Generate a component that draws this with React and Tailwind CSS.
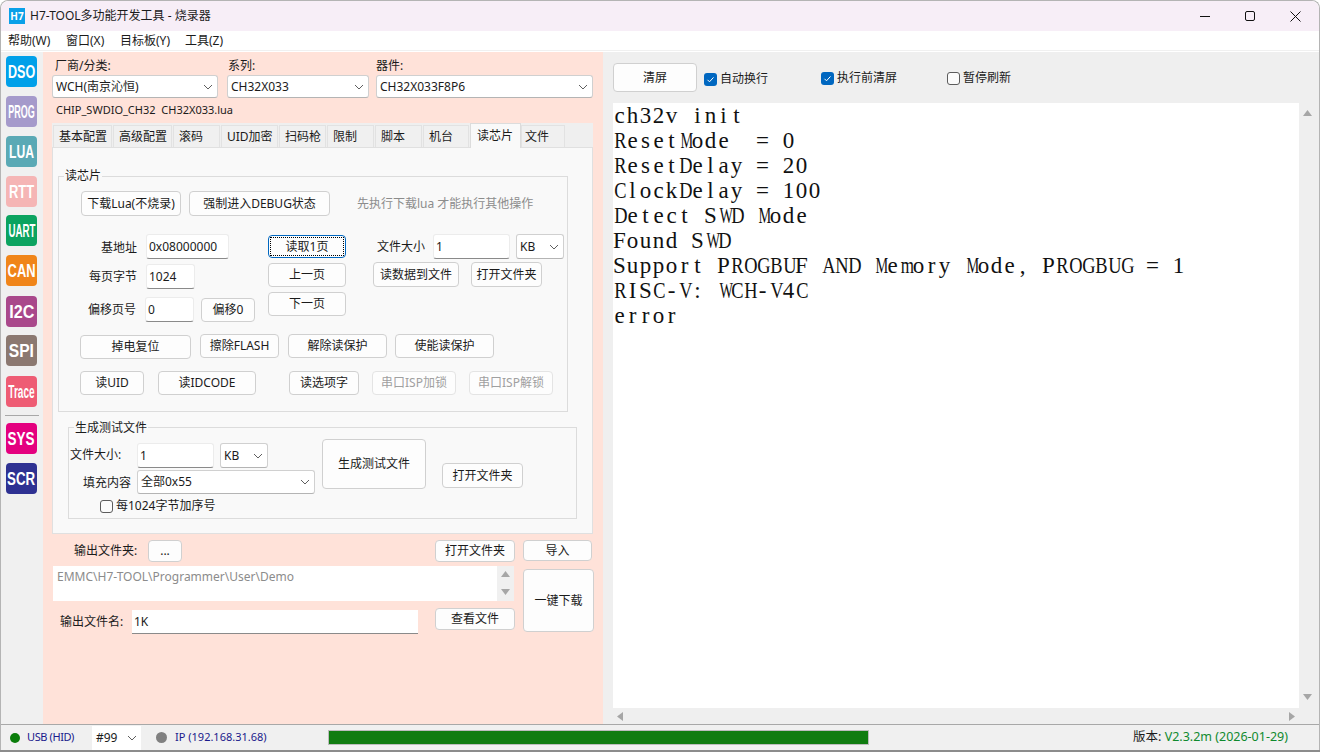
import React from 'react'

const LOG_LINES = [
  'ch32v init',
  'ResetMode  = 0',
  'ResetDelay = 20',
  'ClockDelay = 100',
  'Detect SWD Mode',
  'Found SWD',
  'Support PROGBUF AND Memory Mode, PROGBUG = 1',
  'RISC-V: WCH-V4C',
  'error',
]

const TOOLS = [
  ['DSO', 'bg-[#00a0e9] mt-[4px]', 'text-[19px] scale-x-[0.66]'],
  ['PROG', 'bg-[#a59acb] mt-[9px]', 'text-[18px] scale-x-[0.5]'],
  ['LUA', 'bg-[#5aa9b5] mt-[9px]', 'text-[19px] scale-x-[0.64]'],
  ['RTT', 'bg-[#f5b5b5] mt-[9px]', 'text-[19px] scale-x-[0.68]'],
  ['UART', 'bg-[#0ba360] mt-[8px]', 'text-[18px] scale-x-[0.54]'],
  ['CAN', 'bg-[#f08519] mt-[9px]', 'text-[19px] scale-x-[0.68]'],
  ['I2C', 'bg-[#a9488b] mt-[10px]', 'text-[19px] scale-x-[0.85]'],
  ['SPI', 'bg-[#8b7870] mt-[8px]', 'text-[19px] scale-x-[0.82]'],
  ['Trace', 'bg-[#ee5c74] mt-[10px]', 'text-[18px] scale-x-[0.56]'],
]

const TABS = [
  ['基本配置', 'w-[59px]'],
  ['高级配置', 'w-[59px]'],
  ['滚码', 'w-[47px]'],
  ['UID加密', 'w-[57px]'],
  ['扫码枪', 'w-[47px]'],
  ['限制', 'w-[47px]'],
  ['脚本', 'w-[47px]'],
  ['机台', 'w-[46px]'],
]

// log font is a fixed 13px cell, wide serif caps get squeezed to fit
function squeeze(ch) {
  if (ch === 'M' || ch === 'W') return 0.62
  if (ch === 'm' || ch === 'w') return 0.74
  if (/[A-RT-Z]/.test(ch) && ch !== 'I' && ch !== 'F' && ch !== 'P') return 0.8
  return 1
}

function LogLine({ text }) {
  return (
    <div className="h-[25px] whitespace-pre font-['Liberation_Serif',serif] text-[23px] leading-[25px] text-[#111]">
      {text.split('').map((ch, i) => (
        <span key={i} className="inline-block w-[13px] text-center" style={{ transform: `scaleX(${squeeze(ch)})` }}>
          {ch}
        </span>
      ))}
    </div>
  )
}

function Chevron() {
  return (
    <svg width="10" height="6" viewBox="0 0 10 6" className="shrink-0">
      <path d="M1 1l4 4 4-4" fill="none" stroke="#5f5f5f" strokeWidth="1" />
    </svg>
  )
}

function Btn({ children, className = '', disabled }) {
  return (
    <div className={`flex shrink-0 items-center justify-center rounded-[4px] border border-[#d0d0d0] bg-[#fdfdfd] text-[12px] ${disabled ? 'text-[#a0a0a0] bg-[#f8f8f8] border-[#e4e4e4]' : 'text-[#1b1b1b]'} ${className}`}>
      {children}
    </div>
  )
}

function Input({ children, className = '' }) {
  return (
    <div className={`flex shrink-0 items-center rounded-[3px] border border-[#ececec] border-b-[#8a8a8a] bg-white px-[2px] text-[12px] text-[#1b1b1b] ${className}`}>
      {children}
    </div>
  )
}

function Select({ children, className = '' }) {
  return (
    <div className={`flex shrink-0 items-center justify-between rounded-[3px] border border-[#d0d0d0] border-b-[#b4b4b4] bg-white pl-[3px] pr-[4px] text-[12px] text-[#1b1b1b] ${className}`}>
      <span>{children}</span>
      <Chevron />
    </div>
  )
}

function Check({ checked, label, className = '' }) {
  return (
    <div className={`flex items-center gap-[3px] text-[12px] text-[#1b1b1b] ${className}`}>
      {checked ? (
        <svg width="13" height="13" viewBox="0 0 13 13">
          <rect width="13" height="13" rx="3" fill="#0067c0" />
          <path d="M3.5 6.8l2 2 4-4.4" fill="none" stroke="#fff" strokeWidth="1" />
        </svg>
      ) : (
        <div className="h-[13px] w-[13px] rounded-[3px] border border-[#5c5c5c] bg-[#fbfbfb]" />
      )}
      <span>{label}</span>
    </div>
  )
}

function Arrow({ dir }) {
  const d = { up: 'M0 7L4.5 1 9 7z', down: 'M0 1h9L4.5 7z', left: 'M7 0v9L1 4.5z', right: 'M1 0v9l6-4.5z' }[dir]
  return (
    <svg width="9" height="9" viewBox="0 0 9 9" className="shrink-0">
      <path d={d} fill="#a6a6a6" />
    </svg>
  )
}

function Group({ title, titleClass, className, children }) {
  return (
    <div className={`relative border border-[#dcdcdc] ${className}`}>
      <span className={`absolute left-[5px] bg-[#f9f9f9] px-[1px] text-[12px] leading-[16px] text-[#1b1b1b] ${titleClass}`}>{title}</span>
      {children}
    </div>
  )
}

function TitleBar() {
  return (
    <div className="flex h-[30px] items-center rounded-t-[8px] bg-[#f7eef7] pl-[8px]">
      <div className="flex h-[16px] w-[16px] items-center justify-center bg-[#0aa0e8] text-[10px] font-bold text-white">H7</div>
      <span className="ml-[5px] text-[12px] text-[#1b1b1b]">H7-TOOL多功能开发工具 - 烧录器</span>
      <div className="ml-auto mr-[18px] flex items-center gap-[35px]">
        <svg width="10" height="10" viewBox="0 0 10 10"><path d="M0 5.5h10" stroke="#111" strokeWidth="1" /></svg>
        <svg width="10" height="10" viewBox="0 0 10 10"><rect x=".5" y=".5" width="9" height="9" rx="1.5" fill="none" stroke="#111" /></svg>
        <svg width="11" height="11" viewBox="0 0 11 11"><path d="M.5.5l10 10M10.500.5l-10 10" stroke="#111" strokeWidth="1" /></svg>
      </div>
    </div>
  )
}

function MenuBar() {
  return (
    <div className="flex h-[20px] items-center border-b border-[#f0f0f0] bg-white pl-[7px] text-[12px] text-[#1b1b1b]">
      <span className="w-[58px]">帮助(W)</span>
      <span className="w-[54px]">窗口(X)</span>
      <span className="w-[65px]">目标板(Y)</span>
      <span>工具(Z)</span>
    </div>
  )
}

function Sidebar() {
  const logo = "flex h-[31px] w-[31px] items-center justify-center rounded-[4px] pt-[2px] font-['Liberation_Sans',sans-serif] font-bold text-white"
  return (
    <div className="flex w-[42px] shrink-0 flex-col items-start bg-[#f0f0f0] pl-[5px]">
      {TOOLS.map(([name, box, txt]) => (
        <div key={name} className={`${logo} ${box}`}>
          <span className={`shrink-0 ${txt}`}>{name}</span>
        </div>
      ))}
      <div className="mt-[8px] h-px w-[34px] -translate-x-[1px] bg-[#a8a8a8]" />
      <div className={`mt-[7px] bg-[#e4007f] ${logo}`}>
        <span className="shrink-0 text-[19px] scale-x-[0.71]">SYS</span>
      </div>
      <div className={`mt-[9px] bg-[#2e3192] ${logo}`}>
        <span className="shrink-0 text-[19px] scale-x-[0.7]">SCR</span>
      </div>
    </div>
  )
}

function ReadChipGroup() {
  return (
    <Group title="读芯片" titleClass="top-[-9px]" className="ml-[5px] mt-[28px] h-[236px] w-[510px]">
      <div className="ml-[22px] mt-[14px] flex h-[25px] items-center">
        <Btn className="h-[25px] w-[100px]">下载Lua(不烧录)</Btn>
        <Btn className="ml-[8px] h-[25px] w-[141px]">强制进入DEBUG状态</Btn>
        <span className="ml-[27px] text-[12px] text-[#8c8c8c]">先执行下载lua 才能执行其他操作</span>
      </div>

      <div className="mt-[18px] flex h-[88px]">
        <div className="flex w-[209px] flex-col">
          <div className="flex h-[25px] items-center">
            <span className="w-[78px] pt-[3px] text-right text-[12px] text-[#1b1b1b]">基地址</span>
            <Input className="ml-[9px] h-[25px] w-[83px]">0x08000000</Input>
          </div>
          <div className="mt-[5px] flex h-[25px] items-center">
            <span className="w-[78px] text-right text-[12px] text-[#1b1b1b]">每页字节</span>
            <Input className="ml-[9px] h-[25px] w-[49px]">1024</Input>
          </div>
          <div className="mt-[8px] flex h-[25px] items-center">
            <span className="w-[77px] text-right text-[12px] text-[#1b1b1b]">偏移页号</span>
            <Input className="ml-[9px] h-[25px] w-[49px]">0</Input>
            <Btn className="ml-[7px] h-[24px] w-[54px]">偏移0</Btn>
          </div>
        </div>
        <div className="flex w-[78px] flex-col">
          <Btn className="relative mt-[1px] h-[23px] w-[78px] !border-[#0067c0]">
            <span className="absolute inset-[1px] border border-dotted border-black" />
            读取1页
          </Btn>
          <Btn className="mt-[5px] h-[24px] w-[78px]">上一页</Btn>
          <Btn className="mt-[5px] h-[24px] w-[78px]">下一页</Btn>
        </div>
        <div className="flex flex-col">
          <div className="flex h-[25px] items-center">
            <span className="ml-[31px] w-[56px] text-[12px] text-[#1b1b1b]">文件大小</span>
            <Input className="h-[25px] w-[77px]">1</Input>
            <Select className="ml-[6px] h-[25px] w-[48px]">KB</Select>
          </div>
          <div className="mt-[3px] flex">
            <Btn className="ml-[27px] h-[25px] w-[86px]">读数据到文件</Btn>
            <Btn className="ml-[12px] h-[25px] w-[71px]">打开文件夹</Btn>
          </div>
        </div>
      </div>

      <div className="ml-[21px] mt-[12px] flex items-start">
        <Btn className="mt-[1px] h-[24px] w-[111px]">掉电复位</Btn>
        <Btn className="ml-[9px] h-[24px] w-[79px]">擦除FLASH</Btn>
        <Btn className="ml-[9px] h-[24px] w-[99px]">解除读保护</Btn>
        <Btn className="ml-[8px] h-[24px] w-[99px]">使能读保护</Btn>
      </div>
      <div className="ml-[21px] mt-[12px] flex">
        <Btn className="h-[24px] w-[64px]">读UID</Btn>
        <Btn className="ml-[14px] h-[24px] w-[98px]">读IDCODE</Btn>
        <Btn className="ml-[33px] h-[24px] w-[70px]">读选项字</Btn>
        <Btn disabled className="ml-[13px] h-[24px] w-[84px]">串口ISP加锁</Btn>
        <Btn disabled className="ml-[13px] h-[24px] w-[84px]">串口ISP解锁</Btn>
      </div>
    </Group>
  )
}

function TestFileGroup() {
  return (
    <Group title="生成测试文件" titleClass="top-[-8px]" className="ml-[15px] mt-[15px] flex h-[92px] w-[509px] pt-[15px]">
      <div className="flex w-[246px] flex-col">
        <div className="flex h-[25px] items-center">
          <span className="ml-[1px] w-[67px] pb-[2px] text-[12px] text-[#1b1b1b]">文件大小:</span>
          <Input className="h-[25px] w-[77px]">1</Input>
          <Select className="ml-[6px] h-[25px] w-[48px]">KB</Select>
        </div>
        <div className="mt-[2px] flex h-[24px] items-center">
          <span className="w-[62px] pt-[2px] text-right text-[12px] text-[#1b1b1b]">填充内容</span>
          <Select className="ml-[6px] h-[24px] w-[178px]">全部0x55</Select>
        </div>
        <Check label="每1024字节加序号" className="ml-[31px] mt-[3px]" />
      </div>
      <Btn className="ml-[7px] -mt-[4px] h-[50px] w-[104px]">生成测试文件</Btn>
      <Btn className="ml-[16px] mt-[20px] h-[25px] w-[81px]">打开文件夹</Btn>
    </Group>
  )
}

function LeftPanel() {
  return (
    <div className="flex w-[560px] shrink-0 flex-col bg-[#ffe2d9] pl-[9px] pt-[5px]">
      <div className="flex">
        <div className="w-[166px]">
          <div className="h-[18px] pl-[3px] text-[12px] text-[#1b1b1b]">厂商/分类:</div>
          <Select className="h-[23px] w-[166px]">WCH(南京沁恒)</Select>
        </div>
        <div className="ml-[9px] w-[142px]">
          <div className="h-[18px] pl-[1px] text-[12px] text-[#1b1b1b]">系列:</div>
          <Select className="h-[23px] w-[142px]">CH32X033</Select>
        </div>
        <div className="ml-[7px] w-[217px]">
          <div className="h-[18px] text-[12px] text-[#1b1b1b]">器件:</div>
          <Select className="h-[23px] w-[217px]">CH32X033F8P6</Select>
        </div>
      </div>
      <div className="mt-[4px] h-[16px] whitespace-pre pl-[4px] text-[11px] leading-[16px] text-[#1b1b1b]">CHIP_SWDIO_CH32  CH32X033.lua</div>

      <div className="mt-[5px] flex h-[24px] w-[541px] items-end bg-[#efefef] pl-[1px]">
        {TABS.map(([name, w]) => (
          <div key={name} className={`mr-px flex h-[22px] items-center border border-b-0 border-[#e2e2e2] bg-[#f0f0f0] pl-[5px] text-[12px] text-[#1b1b1b] ${w}`}>{name}</div>
        ))}
        <div className="relative z-10 -mb-px flex h-[25px] w-[51px] items-center border border-b-0 border-[#dcdcdc] bg-[#f9f9f9] pl-[6px] text-[12px] text-[#1b1b1b]">读芯片</div>
        <div className="flex h-[22px] w-[44px] items-center border border-b-0 border-[#e2e2e2] bg-[#f0f0f0] pl-[3px] text-[12px] text-[#1b1b1b]">文件</div>
      </div>
      <div className="h-[387px] w-[541px] border border-[#e0e0e0] bg-[#f9f9f9]">
        <ReadChipGroup />
        <TestFileGroup />
      </div>

      <div className="mt-[5px] flex h-[23px] w-[541px] items-center">
        <span className="ml-[22px] w-[74px] text-[12px] text-[#1b1b1b]">输出文件夹:</span>
        <Btn className="mt-[1px] h-[22px] w-[34px]">...</Btn>
        <Btn className="ml-[253px] h-[22px] w-[80px]">打开文件夹</Btn>
        <Btn className="ml-[8px] h-[21px] w-[69px]">导入</Btn>
      </div>
      <div className="mt-[4px] flex w-[542px]">
        <div className="ml-[1px] w-[461px]">
          <div className="flex h-[35px] bg-white">
            <span className="flex-1 pl-[4px] text-[12px] leading-[22px] text-[#8c8c8c]">EMMC\H7-TOOL\Programmer\User\Demo</span>
            <div className="flex w-[17px] flex-col items-center justify-between bg-[#f0f0f0] py-[4px]">
              <Arrow dir="up" />
              <Arrow dir="down" />
            </div>
          </div>
          <div className="mt-[7px] flex items-start">
            <span className="ml-[7px] mt-[5px] w-[72px] shrink-0 text-[12px] text-[#1b1b1b]">输出文件名:</span>
            <Input className="mt-[2px] h-[24px] w-[286px] !rounded-none !border-0 !border-b !border-[#8a8a8a]">1K</Input>
            <Btn className="ml-[17px] h-[22px] w-[80px]">查看文件</Btn>
          </div>
        </div>
        <Btn className="ml-[9px] mt-[3px] h-[63px] w-[71px]">一键下载</Btn>
      </div>
    </div>
  )
}

function RightPanel() {
  return (
    <div className="flex min-w-0 flex-1 flex-col bg-[#efefef]">
      <div className="flex h-[51px] items-start pl-[10px] pt-[11px]">
        <Btn className="h-[29px] w-[84px]">清屏</Btn>
        <Check checked label="自动换行" className="ml-[7px] mt-[7px]" />
        <Check checked label="执行前清屏" className="ml-[53px] mt-[6px]" />
        <Check label="暂停刷新" className="ml-[50px] mt-[6px]" />
      </div>
      <div className="flex h-[605px] pl-[10px]">
        <div className="w-[686px] bg-white">
          {LOG_LINES.map((line) => (
            <LogLine key={line} text={line} />
          ))}
        </div>
        <div className="flex w-[16px] flex-col items-center justify-between py-[6px]">
          <Arrow dir="up" />
          <Arrow dir="down" />
        </div>
      </div>
      <div className="flex h-[16px] w-[696px] items-center justify-between pl-[13px] pr-[2px]">
        <Arrow dir="left" />
        <Arrow dir="right" />
      </div>
    </div>
  )
}

function StatusBar() {
  return (
    <div className="flex h-[26px] items-center border-t border-[#a8a8a8] bg-[#f0f0f0] pl-[9px] text-[11px]">
      <div className="h-[10px] w-[10px] rounded-full bg-[#0a7d0a]" />
      <span className="ml-[7px] w-[65px] tracking-[-0.4px] text-[#1a1a8c]">USB (HID)</span>
      <Select className="h-[24px] w-[49px] !rounded-none !border-0 !pl-[4px]">#99</Select>
      <div className="ml-[15px] h-[11px] w-[11px] rounded-full bg-[#808080]" />
      <span className="ml-[8px] w-[153px] text-[#1a1a8c]">IP (192.168.31.68)</span>
      <div className="h-[15px] w-[541px] border border-[#bcbcbc] bg-[#107c10]" />
      <span className="ml-auto mr-[31px] text-[12.5px] text-[#1b1b1b]">
        版本: <span className="text-[#0f8a2e]">V2.3.2m (2026-01-29)</span>
      </span>
    </div>
  )
}

export default function App() {
  return (
    <div className="h-[752px] w-[1320px] overflow-hidden bg-white font-['Noto_Sans','Noto_Sans_CJK_SC',sans-serif]">
      <div className="flex h-[750px] w-[1320px] flex-col rounded-t-[8px] border border-b-0 border-[#b4b4b4]">
        <TitleBar />
        <MenuBar />
        <div className="flex h-[673px] border-t border-white">
          <Sidebar />
          <LeftPanel />
          <RightPanel />
        </div>
        <StatusBar />
      </div>
      <div className="h-[2px] bg-[#8c8c8c]" />
    </div>
  )
}
